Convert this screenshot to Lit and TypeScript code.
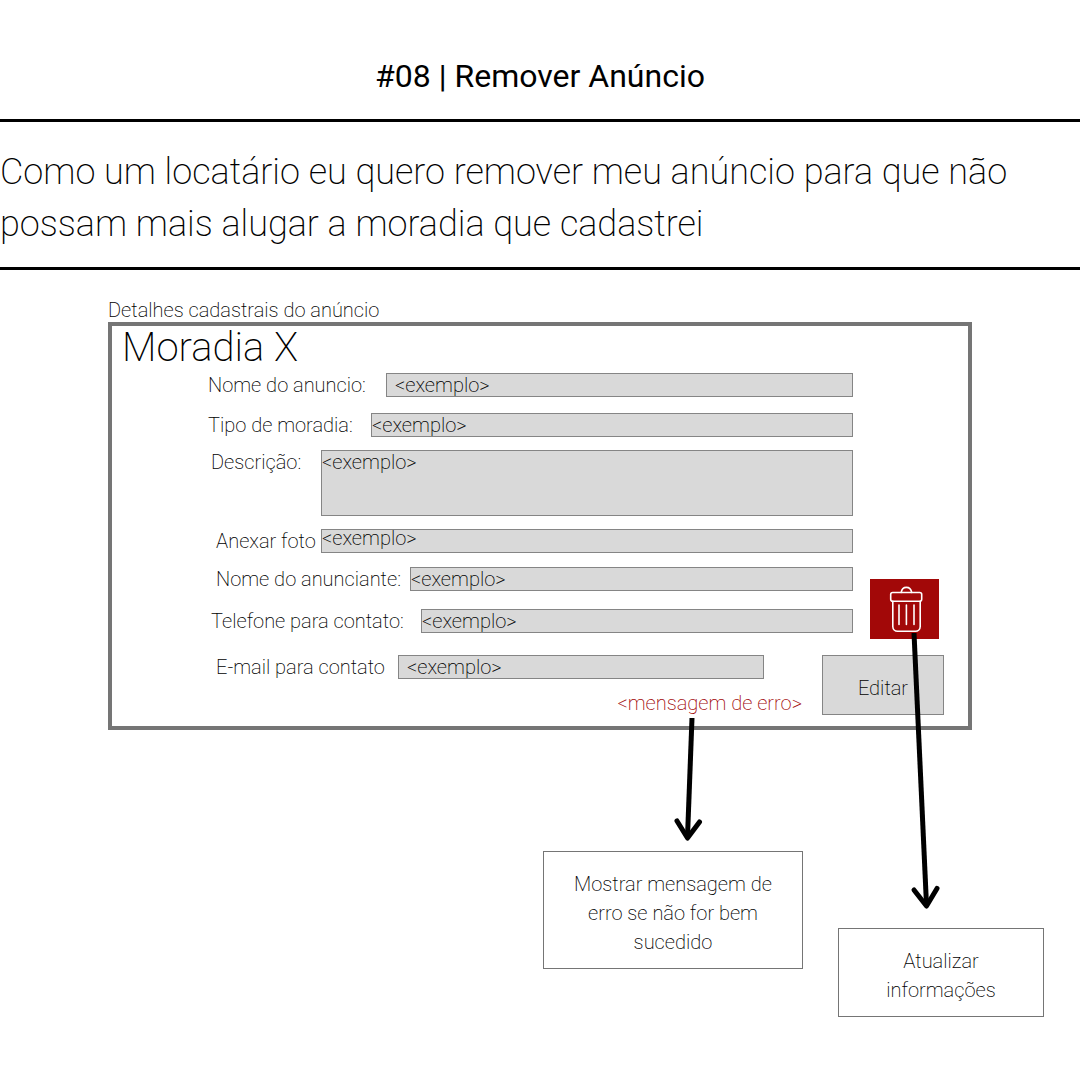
import { LitElement, html, css } from "lit";
import { customElement } from "lit/decorators.js";

@customElement("app-root")
export class AppRoot extends LitElement {
  static styles = css`
    :host {
      display: block;
      min-height: 100vh;
      background: #fff;
      color: #000;
      font-family: Roboto, "Liberation Sans", sans-serif;
      font-size: 20px;
      font-weight: 200;
      line-height: 24px;
    }
    * {
      box-sizing: border-box;
    }
    h1,
    h2,
    p {
      margin: 0;
      font-weight: inherit;
    }

    .title {
      padding: 56px 0 23px;
      font-size: 32px;
      font-weight: 400;
      line-height: 40px;
      text-align: center;
    }
    .story {
      padding: 24px 48px 17px 0;
      border-top: 3px solid #000;
      border-bottom: 3px solid #000;
      font-size: 36px;
      font-weight: 170;
      line-height: 52px;
    }
    .stage {
      width: 80%;
      margin: 0 auto;
      padding: 28px 0 60px;
    }

    .panel {
      padding: 0 24px 11px 10px;
      border: 4px solid #757575;
    }
    .name {
      margin: 0 0 3px;
      font-size: 40px;
      font-weight: 170;
      line-height: 44px;
    }
    .fields {
      display: flex;
      flex-direction: column;
      flex: 1;
      min-width: 0;
      padding-left: 86px;
    }
    .details {
      padding-right: 91px;
    }
    .row {
      display: flex;
      align-items: flex-start;
      margin-bottom: 14px;
    }
    .row label {
      flex: none;
      white-space: nowrap;
    }
    .row input,
    .row textarea {
      flex: 1;
      min-width: 0;
      height: 24px;
      margin: 0;
      padding: 0;
      border: 1px solid #858585;
      border-radius: 0;
      outline: 0;
      background: #d9d9d9;
      color: inherit;
      font: inherit;
      line-height: 22px;
      resize: none;
    }
    .row textarea {
      height: 66px;
    }
    .title-row {
      margin-bottom: 16px;
    }
    .title-row label {
      width: 178px;
    }
    .title-row input {
      padding-left: 8px;
    }
    .type-row {
      margin-bottom: 13px;
    }
    .type-row label {
      width: 163px;
    }
    .text-row {
      margin-bottom: 13px;
      padding-left: 3px;
    }
    .text-row label {
      width: 110px;
    }
    .photo-row {
      padding-left: 8px;
    }
    .photo-row label {
      width: 105px;
    }
    .photo-row input {
      padding-bottom: 6px;
    }
    .owner-row {
      margin-bottom: 18px;
      padding-left: 8px;
    }
    .owner-row label {
      width: 194px;
    }
    .phone-row {
      margin-bottom: 0;
      padding-left: 3px;
    }
    .phone-row label {
      width: 210px;
    }
    .mail-row {
      margin: 0 38px 12px 0;
      padding-left: 8px;
    }
    .mail-row label {
      width: 182px;
    }
    .mail-row input {
      padding-left: 8px;
    }

    .contact {
      display: flex;
      align-items: flex-start;
      gap: 17px;
      padding-right: 5px;
    }
    .footer {
      display: flex;
      align-items: flex-start;
      gap: 20px;
      margin-top: 16px;
    }
    .remove-box {
      position: relative;
      flex: none;
      margin-top: 12px;
    }
    .remove,
    .edit {
      display: block;
      height: 60px;
      margin: 0;
      padding: 0;
      border: 0;
      color: inherit;
      font: inherit;
      cursor: pointer;
    }
    .remove {
      width: 69px;
      background: #a20808;
    }
    .remove svg {
      display: block;
    }
    .edit {
      flex: none;
      width: 122px;
      padding-top: 6px;
      border: 1px solid #858585;
      background: #d9d9d9;
    }
    .error {
      position: relative;
      align-self: flex-end;
      color: #a20808;
    }

    .arrow {
      position: absolute;
      z-index: 1;
      pointer-events: none;
      fill: none;
      stroke: #000;
      stroke-width: 5;
      stroke-linejoin: round;
    }
    .head {
      stroke-linecap: round;
    }
    .error-arrow {
      top: 27px;
      right: 94px;
    }
    .remove-arrow {
      top: 54px;
      left: 34px;
    }

    .notes {
      display: flex;
      align-items: flex-start;
      justify-content: flex-end;
      gap: 35px;
      margin: 121px -72px 0 0;
    }
    .note {
      width: 260px;
      padding: 18px 24px 11px;
      border: 1px solid #757575;
      line-height: 29px;
      text-align: center;
    }
    .update-note {
      width: 206px;
      margin-top: 77px;
    }
  `;

  render() {
    return html`
      <h1 class="title">#08 | Remover Anúncio</h1>
      <p class="story">
        Como um locatário eu quero remover meu anúncio para que não possam mais
        alugar a moradia que cadastrei
      </p>
      <main class="stage">
        <p>Detalhes cadastrais do anúncio</p>
        <form class="panel" @submit=${(e: Event) => e.preventDefault()}>
          <h2 class="name">Moradia X</h2>
          <div class="fields details">
            <div class="row title-row">
              <label for="title">Nome do anuncio:</label>
              <input id="title" type="text" value="<exemplo>" />
            </div>
            <div class="row type-row">
              <label for="type">Tipo de moradia:</label>
              <input id="type" type="text" value="<exemplo>" />
            </div>
            <div class="row text-row">
              <label for="text">Descrição:</label>
              <textarea id="text" .value=${"<exemplo>"}></textarea>
            </div>
            <div class="row photo-row">
              <label for="photo">Anexar foto</label>
              <input id="photo" type="text" value="<exemplo>" />
            </div>
          </div>
          <div class="contact">
            <div class="fields">
              <div class="row owner-row">
                <label for="owner">Nome do anunciante:</label>
                <input id="owner" type="text" value="<exemplo>" />
              </div>
              <div class="row phone-row">
                <label for="phone">Telefone para contato:</label>
                <input id="phone" type="text" value="<exemplo>" />
              </div>
            </div>
            <div class="remove-box">
              <button class="remove" type="button" aria-label="Remover">
                <svg
                  width="69"
                  height="60"
                  viewBox="0 0 69 60"
                  fill="none"
                  stroke="#fff"
                  stroke-width="1.6"
                  stroke-linecap="round"
                  stroke-linejoin="round"
                >
                  <path d="M31.2 13.4C31.7 10.2 33.6 8.4 36.4 8.4S41.1 10.2 41.7 13.4" />
                  <rect x="20.7" y="13.5" width="31" height="8.8" rx="2" />
                  <path d="M22.8 22.3V47.5a4.8 4.8 0 0 0 4.8 4.8H45.4a4.8 4.8 0 0 0 4.8-4.8V22.3" />
                  <path d="M29 26V45.5M36.4 26V45.5M44 26V45.5" />
                </svg>
              </button>
              <svg class="arrow remove-arrow" width="44" height="280" aria-hidden="true">
                <path d="M10 0L22.5 272" />
                <path class="head" d="M10 257L22.5 273L33 255.5" />
              </svg>
            </div>
          </div>
          <div class="footer">
            <div class="fields">
              <div class="row mail-row">
                <label for="mail">E-mail para contato</label>
                <input id="mail" type="text" value="<exemplo>" />
              </div>
              <p class="error">
                &lt;mensagem de erro&gt;
                <svg class="arrow error-arrow" width="36" height="126" aria-hidden="true">
                  <path d="M20 0L15.5 119" />
                  <path class="head" d="M5 103L15.5 120L27.5 104" />
                </svg>
              </p>
            </div>
            <button class="edit" type="button">Editar</button>
          </div>
        </form>
        <div class="notes">
          <p class="note">Mostrar mensagem de erro se não for bem sucedido</p>
          <p class="note update-note">Atualizar informações</p>
        </div>
      </main>
    `;
  }
}
